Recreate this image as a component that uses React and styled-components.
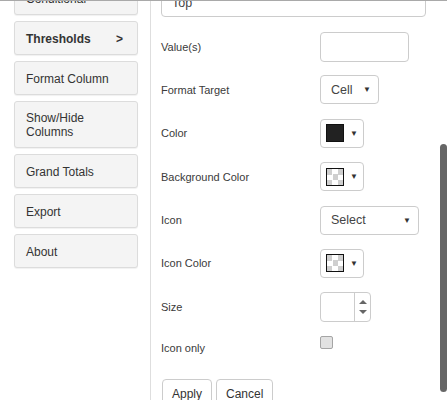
import React from "react";
import styled, { createGlobalStyle } from "styled-components";

const GlobalStyle = createGlobalStyle`
  html, body {
    margin: 0;
    padding: 0;
    background: #fff;
  }
  body {
    font-family: "Liberation Sans", Arial, sans-serif;
    color: #333;
  }
`;

// Оквир на целия прозорец
const Frame = styled.div`
  display: flex;
  width: 447px;
  height: 400px;
  overflow: hidden;
  box-sizing: border-box;
  border-top: 1px solid #a9a9a9;
`;

const Sidebar = styled.nav`
  width: 150px;
  flex-shrink: 0;
  display: flex;
  flex-direction: column;
  gap: 6px;
  padding-left: 14px;
  margin-top: -20px;
  box-sizing: border-box;
`;

const MenuButton = styled.div`
  width: 124px;
  box-sizing: border-box;
  min-height: 34px;
  display: flex;
  align-items: center;
  justify-content: space-between;
  padding: ${(p) => (p.$tall ? "9px 14px 8px 11px" : "1px 14px 0 11px")};
  background: #f4f4f4;
  border: 1px solid #dcdcdc;
  border-radius: 3px;
  box-shadow: 0 1px 1px rgba(0, 0, 0, 0.06);
  font-size: 12px;
  line-height: 14px;
  font-weight: ${(p) => (p.$active ? "bold" : "normal")};
  color: #333;
`;

const Panel = styled.main`
  flex: 1;
  display: flex;
  border-left: 1px solid #dedede;
`;

const Form = styled.div`
  flex: 1;
  padding-left: 10px;
  margin-top: -13px;
`;

const TopSelect = styled.div`
  width: 265px;
  height: 29px;
  box-sizing: border-box;
  border: 1px solid #ccc;
  border-radius: 4px;
  padding: 0 10px;
  display: flex;
  align-items: center;
  font-size: 12.5px;
  color: #444;
  margin-bottom: 15px;
`;

const Row = styled.div`
  display: flex;
  align-items: flex-start;
  height: 43.4px;
`;

const Label = styled.div`
  width: 159px;
  flex-shrink: 0;
  height: ${(p) => p.$h || 30}px;
  display: flex;
  align-items: center;
  font-size: 11px;
  color: #3a3a3a;
`;

const TextInput = styled.input`
  width: 89px;
  height: 30px;
  box-sizing: border-box;
  border: 1px solid #ccc;
  border-radius: 4px;
  margin: 0;
  padding: 0 8px;
  font: inherit;
  outline: none;
`;

const SelectBox = styled.div`
  width: ${(p) => p.$w}px;
  height: 29px;
  box-sizing: border-box;
  border: 1px solid #ccc;
  border-radius: 4px;
  padding: 0 7px 0 10px;
  display: flex;
  align-items: center;
  justify-content: space-between;
  font-size: 12.5px;
  color: #444;
`;

const Arrow = styled.span`
  font-size: 8px;
  color: #333;
`;

const ColorButton = styled.div`
  width: 44px;
  height: 29px;
  box-sizing: border-box;
  border: 1px solid #ccc;
  border-radius: 4px;
  padding-left: 5px;
  display: flex;
  align-items: center;
  gap: 6px;
`;

const Swatch = styled.span`
  width: 18px;
  height: 18px;
  box-sizing: border-box;
  border: 1px solid #111;
  background: ${(p) =>
    p.$color ||
    "repeating-conic-gradient(#fff 0 25%, #cfcfcf 0 50%) 0 0 / 11px 11px"};
`;

const Spinner = styled.div`
  width: 51px;
  height: 30px;
  box-sizing: border-box;
  border: 1px solid #ccc;
  border-radius: 4px;
  display: flex;
`;

const SpinField = styled.div`
  width: 33px;
  border-right: 1px solid #ccc;
`;

const SpinArrows = styled.div`
  flex: 1;
  display: flex;
  flex-direction: column;
  align-items: center;
  justify-content: center;
  gap: 6px;
`;

const Tri = styled.span`
  width: 0;
  height: 0;
  border-left: 4px solid transparent;
  border-right: 4px solid transparent;
  ${(p) =>
    p.$down ? "border-top: 4px solid #666;" : "border-bottom: 4px solid #666;"}
`;

const CheckBox = styled.span`
  width: 13px;
  height: 13px;
  box-sizing: border-box;
  border: 1px solid #a5a5a5;
  border-radius: 2px;
  background: #e2e2e2;
`;

const Actions = styled.div`
  display: flex;
  gap: 4px;
  margin-left: 1px;
`;

const Button = styled.button`
  height: 30px;
  padding: 0 9px;
  margin: 0;
  background: #fff;
  border: 1px solid #ccc;
  border-radius: 4px;
  font-family: inherit;
  font-size: 12px;
  color: #333;
`;

const Track = styled.div`
  width: 7px;
  flex-shrink: 0;
`;

const Thumb = styled.div`
  margin-top: 143px;
  height: 248px;
  background: #666;
  border-radius: 4px;
`;

const menu = [
  { label: "Conditional" },
  { label: "Thresholds", active: true },
  { label: "Format Column" },
  { label: "Show/Hide Columns", tall: true },
  { label: "Grand Totals" },
  { label: "Export" },
  { label: "About" },
];

const ColorPicker = ({ color }) => (
  <ColorButton>
    <Swatch $color={color} />
    <Arrow>▼</Arrow>
  </ColorButton>
);

const App = () => (
  <>
    <GlobalStyle />
    <Frame>
      <Sidebar>
        {menu.map((item) => (
          <MenuButton key={item.label} $active={item.active} $tall={item.tall}>
            {item.tall ? (
              <span>
                Show/Hide
                <br />
                Columns
              </span>
            ) : (
              <span>{item.label}</span>
            )}
            {item.active && <span>&gt;</span>}
          </MenuButton>
        ))}
      </Sidebar>

      <Panel>
        <Form>
          <TopSelect>Top</TopSelect>

          <Row>
            <Label>Value(s)</Label>
            <TextInput readOnly />
          </Row>
          <Row>
            <Label $h={29}>Format Target</Label>
            <SelectBox $w={59}>
              Cell <Arrow>▼</Arrow>
            </SelectBox>
          </Row>
          <Row>
            <Label $h={29}>Color</Label>
            <ColorPicker color="#222" />
          </Row>
          <Row>
            <Label $h={29}>Background Color</Label>
            <ColorPicker />
          </Row>
          <Row>
            <Label $h={29}>Icon</Label>
            <SelectBox $w={99}>
              Select <Arrow>▼</Arrow>
            </SelectBox>
          </Row>
          <Row>
            <Label $h={29}>Icon Color</Label>
            <ColorPicker />
          </Row>
          <Row>
            <Label>Size</Label>
            <Spinner>
              <SpinField />
              <SpinArrows>
                <Tri />
                <Tri $down />
              </SpinArrows>
            </Spinner>
          </Row>
          <Row>
            <Label $h={25}>Icon only</Label>
            <CheckBox />
          </Row>
          <Actions>
            <Button>Apply</Button>
            <Button>Cancel</Button>
          </Actions>
        </Form>
        <Track>
          <Thumb />
        </Track>
      </Panel>
    </Frame>
  </>
);

export default App;
